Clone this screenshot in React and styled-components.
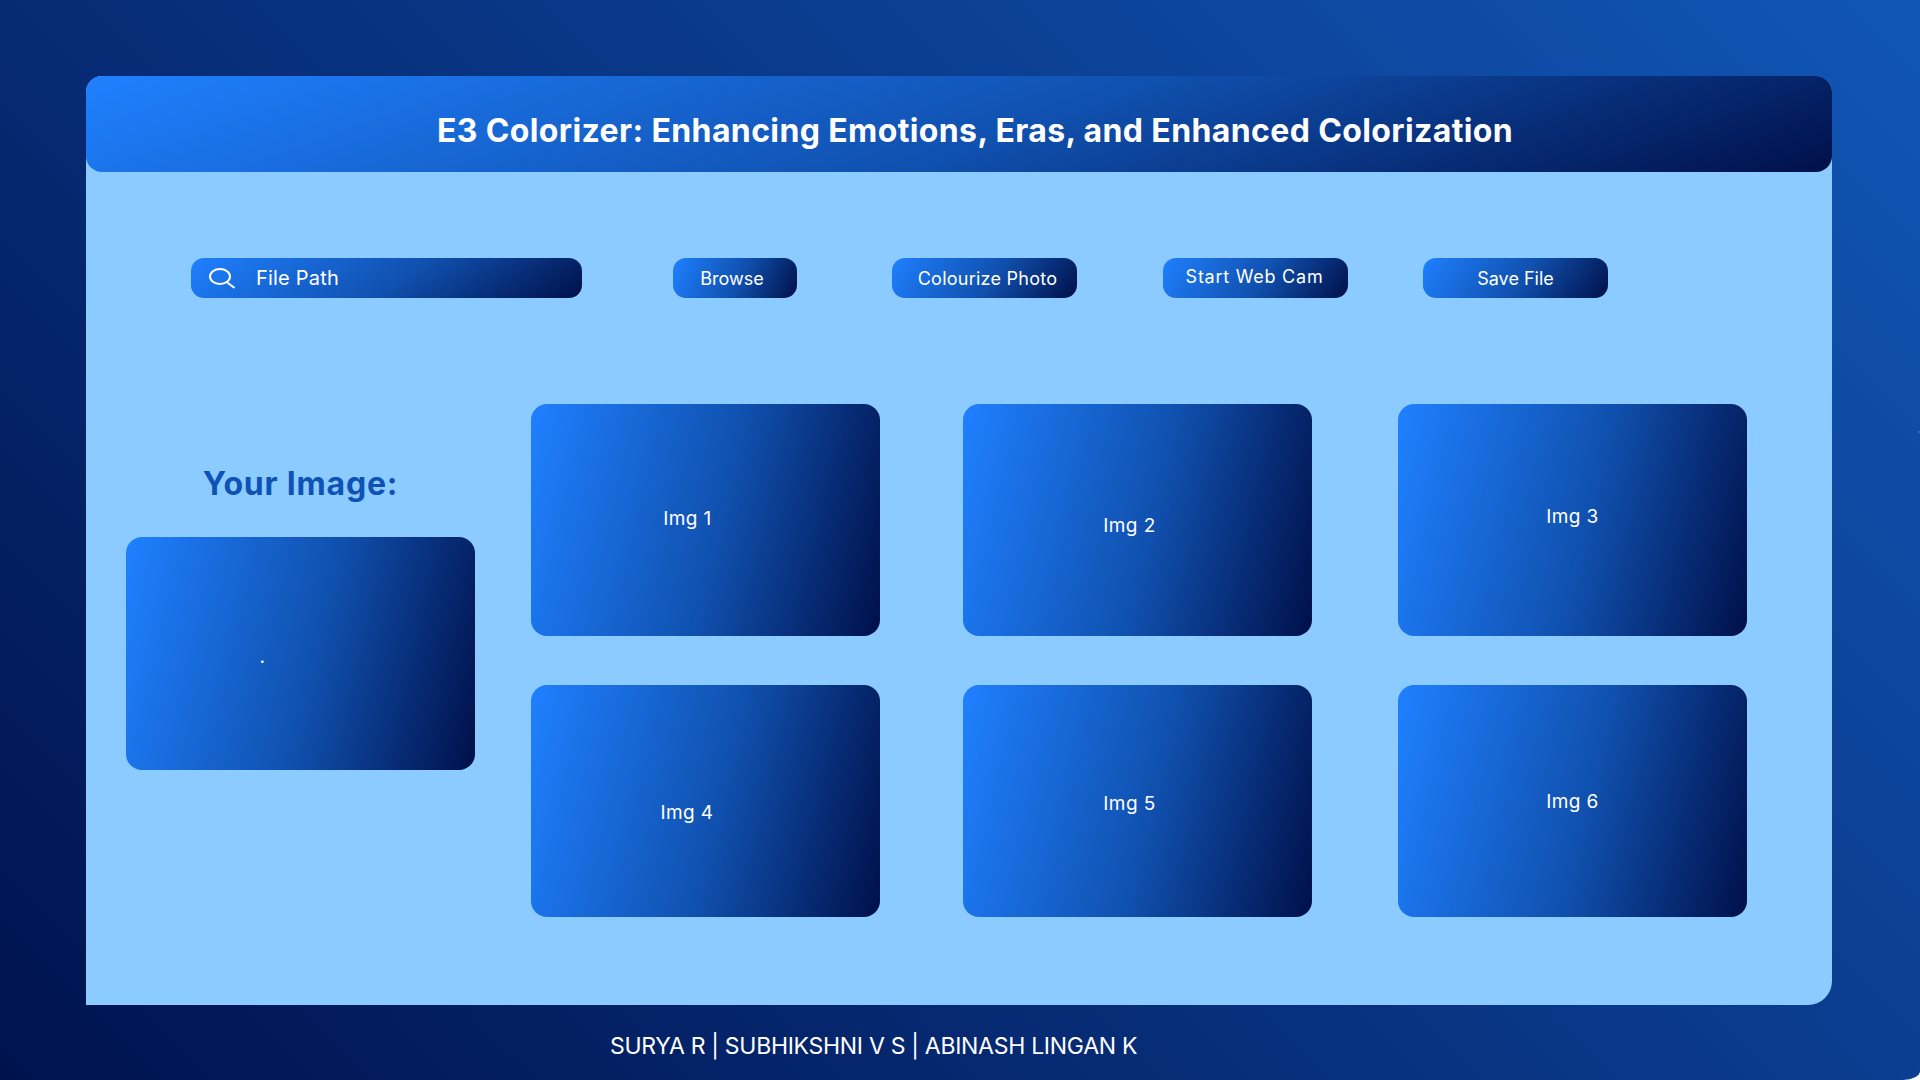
import React from "react";
import styled, { createGlobalStyle } from "styled-components";

const GlobalStyle = createGlobalStyle`
  html, body {
    margin: 0;
    padding: 0;
    background: #fff;
  }
  body {
    font-family: "Inter", "Noto Sans", sans-serif;
    overflow: hidden;
  }
`;

const blueToNavy = (angle) =>
  `linear-gradient(${angle}deg, #1f80ff 0%, #1050ae 54%, #00104a 100%)`;

const Page = styled.div`
  position: relative;
  width: 1920px;
  height: 1080px;
  box-sizing: border-box;
  padding: 76px 88px 0 86px;
  background: linear-gradient(45deg, #00124e 0%, #1156b6 100%);
  border-bottom-right-radius: 17px 9px;
  display: flex;
  flex-direction: column;
`;

const Panel = styled.main`
  height: 929px;
  background: #8ccbff;
  border-radius: 16px 16px 24px 0;
  display: flex;
  flex-direction: column;
`;

const Header = styled.header`
  height: 96px;
  flex: none;
  display: flex;
  align-items: center;
  justify-content: center;
  padding-top: 12px;
  box-sizing: border-box;
  border-radius: 16px;
  background: ${blueToNavy(160)};
`;

const Title = styled.h1`
  margin: 0 0 0 32px;
  font-size: 32px;
  font-weight: 700;
  letter-spacing: 0.38px;
  color: #fff;
`;

const Toolbar = styled.div`
  display: flex;
  margin-top: 86px;
  padding-left: 105px;
  height: 40px;
`;

const Pill = styled.div`
  display: flex;
  align-items: center;
  justify-content: center;
  box-sizing: border-box;
  width: ${(p) => p.$w}px;
  margin-left: ${(p) => p.$gap || 0}px;
  border-radius: 13px;
  color: #fff;
  font-size: 18px;
  background: ${(p) => blueToNavy(p.$angle || 125)};
`;

const PillText = styled.span`
  margin: ${(p) => p.$y || 0}px 0 0 ${(p) => p.$x || 0}px;
  letter-spacing: ${(p) => p.$spacing || 0}px;
`;

const SearchBar = styled(Pill)`
  justify-content: flex-start;
  padding-left: 17px;
  font-size: 20px;
  gap: 20px;
  letter-spacing: 0.2px;
`;

const Content = styled.div`
  display: flex;
  margin-top: 106px;
  padding-left: 40px;
  gap: 56px;
`;

const LeftColumn = styled.section`
  width: 349px;
  display: flex;
  flex-direction: column;
  padding-top: 56px;
`;

const SectionTitle = styled.h2`
  margin: 0 0 29px;
  height: 48px;
  line-height: 48px;
  text-align: center;
  font-size: 32px;
  font-weight: 700;
  letter-spacing: 0.8px;
  color: #0f52b6;
`;

const Grid = styled.section`
  display: grid;
  grid-template-columns: 432px 435px 349px;
  grid-auto-rows: 232px;
  row-gap: 49px;
`;

const Card = styled.div`
  width: 349px;
  height: ${(p) => p.$h || 232}px;
  display: flex;
  align-items: center;
  justify-content: center;
  border-radius: 16px;
  background: ${blueToNavy(103)};
  color: #fff;
  font-size: 19px;
  letter-spacing: 0.4px;
`;

const CardLabel = styled.span`
  margin: ${(p) => p.$y || 0}px 0 0 ${(p) => p.$x || 0}px;
`;

const Footer = styled.footer`
  margin: 26px 0 0 524px;
  color: #fff;
  font-size: 23px;
  line-height: 30px;
  letter-spacing: -0.29px;
`;

const EdgeTick = styled.i`
  position: absolute;
  right: 0;
  top: 431px;
  width: 2px;
  height: 2px;
  background: #3a62e6;
`;

const SearchIcon = () => (
  <svg width="28" height="22" viewBox="0 0 28 22" fill="none" stroke="#fff" strokeWidth="2">
    <ellipse cx="12" cy="9.5" rx="10" ry="7.5" />
    <path d="M18.5 15l7.5 5.5" strokeLinecap="round" />
  </svg>
);

const images = [
  { name: "Img 1", x: -36, y: -4 },
  { name: "Img 2", x: -16, y: 10 },
  { name: "Img 3", x: 0, y: -8 },
  { name: "Img 4", x: -37, y: 22 },
  { name: "Img 5", x: -16, y: 4 },
  { name: "Img 6", x: 0, y: 0 },
];

const App = () => (
  <>
    <GlobalStyle />
    <Page>
      <Panel>
        <Header>
          <Title>E3 Colorizer: Enhancing Emotions, Eras, and Enhanced Colorization</Title>
        </Header>
        <Toolbar>
          <SearchBar $w={391} $angle={145}>
            <SearchIcon />
            <span>File Path</span>
          </SearchBar>
          <Pill $w={124} $gap={91} $angle={115}>
            <PillText $x={-6}>Browse</PillText>
          </Pill>
          <Pill $w={185} $gap={95}>
            <PillText $x={6} $spacing={0.25}>Colourize Photo</PillText>
          </Pill>
          <Pill $w={185} $gap={86}>
            <PillText $x={-2} $y={-4} $spacing={0.75}>Start Web Cam</PillText>
          </Pill>
          <Pill $w={185} $gap={75}>
            <PillText>Save File</PillText>
          </Pill>
        </Toolbar>
        <Content>
          <LeftColumn>
            <SectionTitle>Your Image:</SectionTitle>
            <Card $h={233}>
              <CardLabel $x={-76} $y={6}>.</CardLabel>
            </Card>
          </LeftColumn>
          <Grid>
            {images.map((img) => (
              <Card key={img.name}>
                <CardLabel $x={img.x} $y={img.y}>{img.name}</CardLabel>
              </Card>
            ))}
          </Grid>
        </Content>
      </Panel>
      <Footer>SURYA R | SUBHIKSHNI V S | ABINASH LINGAN K</Footer>
      <EdgeTick />
    </Page>
  </>
);

export default App;
